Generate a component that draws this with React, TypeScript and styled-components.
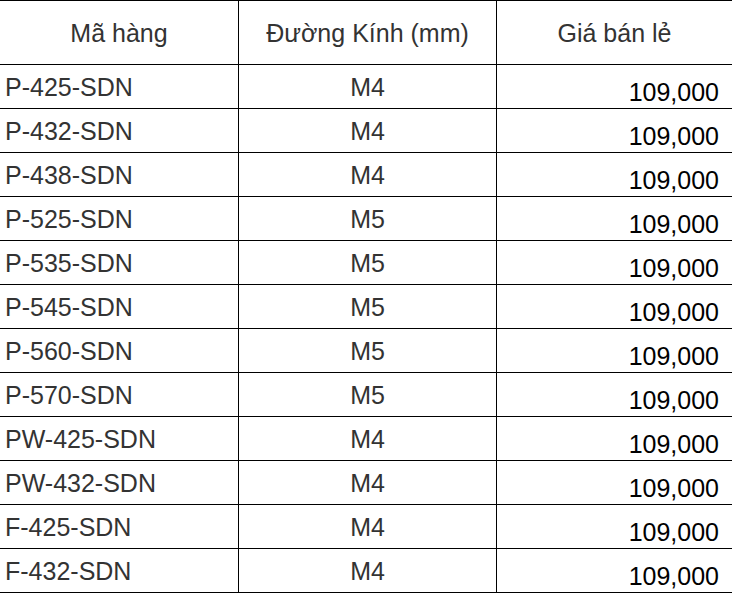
import React from "react";
import styled, { createGlobalStyle } from "styled-components";

const GlobalStyle = createGlobalStyle`
  html, body {
    margin: 0;
    padding: 0;
    background: #fff;
  }
  body {
    font-family: "Liberation Sans", Arial, sans-serif;
  }
`;

type Item = {
  code: string;
  size: string;
  price: string;
};

const items: Item[] = [
  { code: "P-425-SDN", size: "M4", price: "109,000" },
  { code: "P-432-SDN", size: "M4", price: "109,000" },
  { code: "P-438-SDN", size: "M4", price: "109,000" },
  { code: "P-525-SDN", size: "M5", price: "109,000" },
  { code: "P-535-SDN", size: "M5", price: "109,000" },
  { code: "P-545-SDN", size: "M5", price: "109,000" },
  { code: "P-560-SDN", size: "M5", price: "109,000" },
  { code: "P-570-SDN", size: "M5", price: "109,000" },
  { code: "PW-425-SDN", size: "M4", price: "109,000" },
  { code: "PW-432-SDN", size: "M4", price: "109,000" },
  { code: "F-425-SDN", size: "M4", price: "109,000" },
  { code: "F-432-SDN", size: "M4", price: "109,000" },
];

const App = () => {
  return (
    <>
      <GlobalStyle />
      <Wrap>
        <PriceTable>
          <colgroup>
            <col style={{ width: 239 }} />
            <col style={{ width: 258 }} />
            <col />
          </colgroup>
          <thead>
            <tr>
              <HeadCell>Mã hàng</HeadCell>
              <HeadCell>Đường Kính (mm)</HeadCell>
              <HeadCell>Giá bán lẻ</HeadCell>
            </tr>
          </thead>
          <tbody>
            {items.map((item, i) => (
              <tr key={i}>
                <CodeCell>{item.code}</CodeCell>
                <SizeCell>{item.size}</SizeCell>
                <PriceCell>{item.price}</PriceCell>
              </tr>
            ))}
          </tbody>
        </PriceTable>
      </Wrap>
    </>
  );
};

const Wrap = styled.div`
  width: 732px;
  height: 594px;
  overflow: hidden;
`;

const PriceTable = styled.table`
  width: 734px;
  margin-left: -1px;
  border-collapse: collapse;
  table-layout: fixed;
  font-size: 25px;
  color: #333;
`;

const Cell = styled.td`
  border: 1px solid #000;
  padding: 0;
  height: 44px;
  box-sizing: border-box;
  vertical-align: middle;
  white-space: nowrap;
`;

const HeadCell = styled(Cell).attrs({ as: "th" })`
  height: 64px;
  font-weight: normal;
  text-align: center;
  padding-top: 2px;
`;

const CodeCell = styled(Cell)`
  text-align: left;
  padding-left: 5px;
  padding-top: 2px;
`;

const SizeCell = styled(Cell)`
  text-align: center;
  padding-top: 2px;
`;

const PriceCell = styled(Cell)`
  text-align: right;
  padding-right: 13px;
  padding-top: 12px;
  color: #000;
`;

export default App;
